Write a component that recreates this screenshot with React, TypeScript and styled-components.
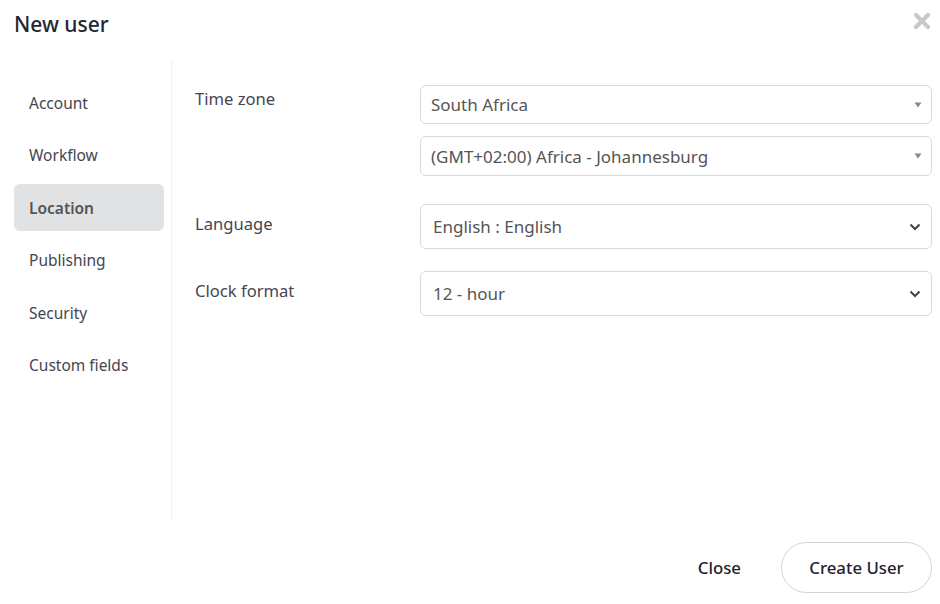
import React from "react";
import styled, { createGlobalStyle } from "styled-components";

const Global = createGlobalStyle`
  html, body { margin: 0; padding: 0; background: #fff; }
  body { font-family: "Noto Sans", "Open Sans", sans-serif; }
  * { box-sizing: border-box; }
`;

const Dialog = styled.div`
  width: 940px;
  height: 604px;
  display: flex;
  flex-direction: column;
  background: #fff;
`;

const Header = styled.div`
  height: 60px;
  display: flex;
  align-items: flex-start;
  justify-content: space-between;
  padding: 9px 8px 0 14px;
`;

const Title = styled.h1`
  margin: 0;
  font-size: 21px;
  font-weight: 500;
  color: #232634;
  line-height: 30px;
`;

const CloseX = styled.button`
  border: 0;
  background: none;
  padding: 0;
  margin-top: 2px;
  width: 20px;
  height: 20px;
  display: flex;
  align-items: center;
  justify-content: center;
  cursor: pointer;
`;

const Body = styled.div`
  flex: 1;
  display: flex;
  min-height: 0;
`;

const Sidebar = styled.nav`
  width: 172px;
  height: 461px;
  padding: 19px 7px 0 14px;
  border-right: 1px solid #f1f1f2;
  display: flex;
  flex-direction: column;
  gap: 5.5px;
`;

const NavItem = styled.div<{ $active?: boolean }>`
  height: 47px;
  padding: 0 15px;
  display: flex;
  align-items: center;
  border-radius: 6px;
  font-size: 15.5px;
  color: ${(p) => (p.$active ? "#555" : "#44464f")};
  font-weight: ${(p) => (p.$active ? 600 : 400)};
  background: ${(p) => (p.$active ? "#e1e2e4" : "transparent")};
`;

const Content = styled.div`
  flex: 1;
  padding: 25px 8px 0 23px;
  display: flex;
  flex-direction: column;
`;

const FieldRow = styled.div<{ $mb: number }>`
  display: flex;
  margin-bottom: ${(p) => p.$mb}px;
`;

const Label = styled.div<{ $pt: number }>`
  width: 225px;
  padding-top: ${(p) => p.$pt}px;
  font-size: 16.6px;
  color: #44464f;
  line-height: 24px;
`;

const Controls = styled.div`
  flex: 1;
  display: flex;
  flex-direction: column;
  gap: 12px;
`;

const Select = styled.div<{ $h: number; $pl: number }>`
  height: ${(p) => p.$h}px;
  border: 1px solid #d9d9d9;
  border-radius: 6px;
  display: flex;
  align-items: center;
  justify-content: space-between;
  padding: 0 9px 0 ${(p) => p.$pl}px;
  font-size: 17px;
  color: #555;
  background: #fff;
`;

const Footer = styled.div`
  height: 83px;
  display: flex;
  align-items: center;
  justify-content: flex-end;
  gap: 40px;
  padding: 10px 8px 0 0;
`;

const TextButton = styled.button`
  border: 0;
  background: none;
  font-family: inherit;
  font-size: 16.8px;
  font-weight: 500;
  color: #1f2230;
  padding: 0;
`;

const PillButton = styled.button`
  height: 51px;
  width: 151px;
  border: 1px solid #d4d4d4;
  border-radius: 26px;
  background: #fff;
  font-family: inherit;
  font-size: 16.8px;
  font-weight: 500;
  color: #1f2230;
`;

const Triangle = () => (
  <svg width="8" height="6" viewBox="0 0 8 6">
    <path d="M0.5 0.5 L7.5 0.5 L4 5.5 Z" fill="#8a8a8a" />
  </svg>
);

const Chevron = () => (
  <svg width="12" height="8" viewBox="0 0 12 8" style={{ marginRight: 1 }}>
    <path d="M1.5 1.5 L6 6 L10.5 1.5" fill="none" stroke="#444" strokeWidth="2" />
  </svg>
);

const XIcon = () => (
  <svg width="18" height="18" viewBox="0 0 18 18">
    <path d="M3 3 L15 15 M15 3 L3 15" stroke="#c8c8c8" strokeWidth="4.2" strokeLinecap="round" />
  </svg>
);

const navItems = ["Account", "Workflow", "Location", "Publishing", "Security", "Custom fields"];

export default function App() {
  return (
    <>
      <Global />
      <Dialog>
        <Header>
          <Title>New user</Title>
          <CloseX aria-label="close">
            <XIcon />
          </CloseX>
        </Header>
        <Body>
          <Sidebar>
            {navItems.map((n) => (
              <NavItem key={n} $active={n === "Location"}>
                {n}
              </NavItem>
            ))}
          </Sidebar>
          <Content>
            <FieldRow $mb={28}>
              <Label $pt={2}>Time zone</Label>
              <Controls>
                <Select $h={39} $pl={10}>
                  <span>South Africa</span>
                  <Triangle />
                </Select>
                <Select $h={40} $pl={10}>
                  <span>(GMT+02:00) Africa - Johannesburg</span>
                  <Triangle />
                </Select>
              </Controls>
            </FieldRow>
            <FieldRow $mb={22}>
              <Label $pt={8}>Language</Label>
              <Controls>
                <Select $h={45} $pl={12}>
                  <span>English : English</span>
                  <Chevron />
                </Select>
              </Controls>
            </FieldRow>
            <FieldRow $mb={0}>
              <Label $pt={8}>Clock format</Label>
              <Controls>
                <Select $h={45} $pl={12}>
                  <span>12 - hour</span>
                  <Chevron />
                </Select>
              </Controls>
            </FieldRow>
          </Content>
        </Body>
        <Footer>
          <TextButton>Close</TextButton>
          <PillButton>Create User</PillButton>
        </Footer>
      </Dialog>
    </>
  );
}
